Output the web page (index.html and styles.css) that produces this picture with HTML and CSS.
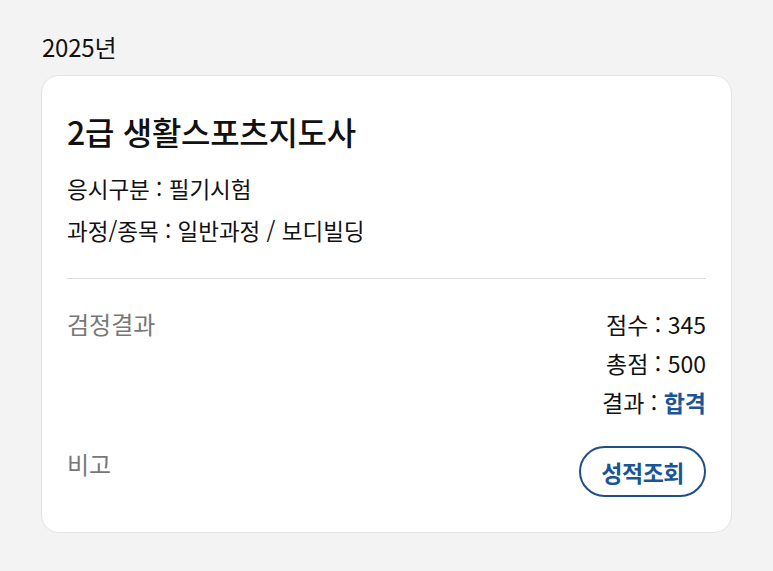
FILE: index.html
```html
<!DOCTYPE html>
<html lang="ko">
	<head>
		<meta charset="UTF-8">
		<meta name="viewport" content="width=device-width, initial-scale=1.0">
		<title>검정결과</title>
		<link rel="stylesheet" href="styles.css">
	</head>
	<body>
		<main class="page">
			<h2 class="year">2025년</h2>
			<section class="card">
				<h1 class="title">2급 생활스포츠지도사</h1>
				<p class="info">응시구분 : 필기시험</p>
				<p class="info">과정/종목 : 일반과정 / 보디빌딩</p>
				<hr class="divider">
				<div class="row">
					<span class="label">검정결과</span>
					<ul class="scores">
						<li>점수 : 345</li>
						<li>총점 : 500</li>
						<li>결과 : <strong class="pass">합격</strong></li>
					</ul>
				</div>
				<div class="row row-note">
					<span class="label">비고</span>
					<button type="button" class="btn">성적조회</button>
				</div>
			</section>
		</main>
	</body>
</html>
```

FILE: styles.css
```css
body {
	margin: 0;
	padding: 0;
	font-family: "Noto Sans CJK KR", "Noto Sans", sans-serif;
	background-color: #f3f3f3;
	color: #111111;
}

.page {
	padding: 30px 41px 0 41px;
	width: 691px;
}

.year {
	margin: 0 0 12px 1px;
	font-size: 24px;
	font-weight: 400;
	letter-spacing: -0.2px;
	line-height: 33px;
}

.card {
	background-color: #ffffff;
	border: 1px solid #e3e3e3;
	border-radius: 18px;
	padding: 33px 25px 35px 25px;
}

.title {
	margin: 0 0 14px 0;
	font-size: 32px;
	font-weight: 500;
	letter-spacing: -0.3px;
	line-height: 44px;
}

.info {
	margin: 0;
	font-size: 22.5px;
	letter-spacing: 0;
	line-height: 42px;
}

.divider {
	border: none;
	border-top: 1px solid #dddddd;
	margin: 27px 0 26px 0;
}

.row {
	display: flex;
	justify-content: space-between;
	align-items: flex-start;
}

.label {
	font-size: 24px;
	color: #777777;
	letter-spacing: 0;
	line-height: 38px;
}

.scores {
	list-style: none;
	margin: 0;
	padding: 0;
	text-align: right;
	font-size: 23px;
	letter-spacing: 0;
	line-height: 39px;
}

.pass {
	color: #1a5597;
	font-weight: 700;
}

.row-note {
	margin-top: 24px;
	align-items: center;
}

.row-note .label {
	margin-top: -16px;
}

.btn {
	font-family: inherit;
	font-size: 23px;
	font-weight: 700;
	letter-spacing: -0.5px;
	color: #1a5597;
	background-color: #ffffff;
	border: 2px solid #1f4f86;
	border-radius: 26px;
	padding: 0 20px;
	height: 51px;
	cursor: pointer;
}
```
